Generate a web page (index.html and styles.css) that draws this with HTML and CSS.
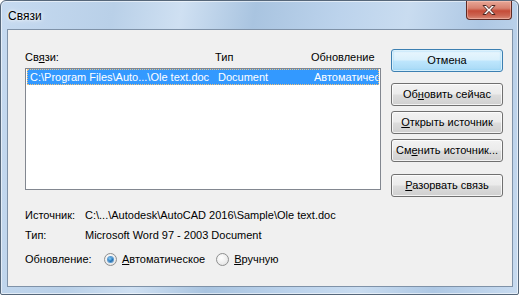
FILE: index.html
```html
<!DOCTYPE html>
<html lang="ru">

<head>
  <meta charset="UTF-8">
  <meta name="viewport" content="width=device-width, initial-scale=1.0">
  <title>Связи</title>
  <link rel="stylesheet" href="styles.css">
</head>

<body>
  <div class="window">
    <div class="titlebar">
      <span class="title">Связи</span>
      <div class="close">
        <svg width="16" height="12" viewBox="0 0 16 12">
          <path d="M2 1.5h3.2L8 4.6l2.8-3.1H14L9.7 6l4.3 4.5h-3.2L8 7.4l-2.8 3.1H2L6.3 6z" fill="#fff" stroke="#4b2520" stroke-width="1" stroke-linejoin="round" />
        </svg>
      </div>
    </div>

    <div class="client">
      <div class="main">
        <div class="links">
          <div class="cols">
            <span>Св<u>я</u>зи:</span>
            <span>Тип</span>
            <span>Обновление</span>
          </div>
          <div class="list">
            <div class="row selected">
              <span class="cell first">C:\Program Files\Auto...\Ole text.doc</span>
              <span class="cell">Document</span>
              <span class="cell">Автоматическое</span>
            </div>
          </div>
        </div>

        <div class="buttons">
          <div class="btn default">Отмена</div>
          <div class="btn gap-top">Об<u>н</u>овить сейчас</div>
          <div class="btn"><u>О</u>ткрыть источник</div>
          <div class="btn">См<u>е</u>нить источник...</div>
          <div class="btn gap-big"><u>Р</u>азорвать связь</div>
        </div>
      </div>

      <div class="info">
        <div class="info-row">
          <span class="info-label">Источник:</span>
          <span>C:\...\Autodesk\AutoCAD 2016\Sample\Ole text.doc</span>
        </div>
        <div class="info-row">
          <span class="info-label">Тип:</span>
          <span>Microsoft Word 97 - 2003 Document</span>
        </div>
        <div class="info-row update">
          <span class="info-label">Обновление:</span>
          <label class="radio"><span class="dot checked"></span><span><u>А</u>втоматическое</span></label>
          <label class="radio"><span class="dot"></span><span><u>В</u>ручную</span></label>
        </div>
      </div>
    </div>
  </div>
</body>

</html>
```

FILE: styles.css
```css
* {
  box-sizing: border-box;
}

body {
  margin: 0;
  background: #ffffff;
  font-family: 'Liberation Sans', Arial, sans-serif;
  font-size: 11px;
  color: #000;
}

u {
  text-decoration: underline;
  text-underline-offset: 1px;
}

.window {
  width: 519px;
  height: 295px;
  border: 1px solid #56677a;
  border-radius: 6px 6px 2px 2px;
  background: linear-gradient(100deg, #c6daf0 0%, #b9d0e8 20%, #cfe0f2 32%, #a9c4e0 45%, #bcd3ec 60%, #c9dcf0 72%, #aec8e4 85%, #c8dbf0 100%);
  display: flex;
  flex-direction: column;
  box-shadow: inset 0 0 0 1px rgba(255, 255, 255, 0.55);
}

.titlebar {
  height: 28px;
  display: flex;
  justify-content: space-between;
  align-items: flex-start;
}

.title {
  font-size: 12px;
  margin: 8px 0 0 7px;
  text-shadow: 0 0 6px #fff, 0 0 3px #fff;
}

.close {
  width: 46px;
  height: 19px;
  margin-right: 6px;
  border: 1px solid #5e2a24;
  border-top: 0;
  border-radius: 0 0 4px 4px;
  background: linear-gradient(#e8a797 0%, #d88270 40%, #c54c38 55%, #cc6552 80%, #d98a78 100%);
  box-shadow: inset 0 0 0 1px rgba(255, 210, 200, 0.45);
  display: flex;
  align-items: center;
  justify-content: center;
}

.client {
  flex: 1;
  margin: 0 5px 7px 6px;
  border: 1px solid #7f92a8;
  background: #f0f0f0;
  padding: 19px 8px 0 17px;
}

.main {
  display: flex;
  gap: 10px;
}

.links {
  width: 356px;
}

.cols,
.row {
  display: grid;
  grid-template-columns: 190px 96px 1fr;
}

.cols {
  height: 19px;
  padding-top: 1px;
  line-height: 14px;
}

.list {
  height: 122px;
  border: 1px solid #828790;
  background: #fff;
  padding: 0 1px;
}

.row {
  height: 16px;
  line-height: 14px;
  overflow: hidden;
  white-space: nowrap;
}

.row.selected {
  background: #3399ff;
  color: #fff;
  border: 1px dotted #f2c27a;
}

.cell {
  overflow: hidden;
}

.cell.first {
  padding-left: 2px;
}

.buttons {
  width: 112px;
  display: flex;
  flex-direction: column;
  gap: 5px;
}

.btn {
  height: 23px;
  line-height: 21px;
  text-align: center;
  border: 1px solid #707070;
  border-radius: 3px;
  background: linear-gradient(#f2f2f2 0%, #ebebeb 48%, #dddddd 52%, #cfcfcf 100%);
  box-shadow: inset 0 0 0 1px rgba(255, 255, 255, 0.75);
  white-space: nowrap;
}

.btn.default {
  border-color: #3c7fb1;
  background: linear-gradient(#eaf6fd 0%, #d9f0fc 48%, #bee6fd 52%, #a7d9f5 100%);
  box-shadow: inset 0 0 0 1px rgba(255, 255, 255, 0.6), inset 0 0 2px 1px #8fd2f5;
}

.btn.gap-top {
  margin-top: 6px;
}

.btn.gap-big {
  margin-top: 7px;
}

.info {
  margin-top: 11px;
}

.info-row {
  display: flex;
  align-items: center;
  height: 14px;
  line-height: 14px;
  margin-bottom: 6px;
  white-space: nowrap;
}

.info-label {
  width: 60px;
}

.info-row.update {
  height: 16px;
  margin-top: 9px;
}

.update .info-label {
  width: 79px;
}

.radio {
  display: flex;
  align-items: center;
  gap: 5px;
  margin-right: 11px;
}

.dot {
  width: 13px;
  height: 13px;
  border-radius: 50%;
  border: 1px solid #8e8f8f;
  background: radial-gradient(circle at 40% 35%, #ffffff 0%, #ececec 60%, #d6d6d6 100%);
  display: flex;
  align-items: center;
  justify-content: center;
}

.dot.checked::after {
  content: "";
  width: 5px;
  height: 5px;
  border-radius: 50%;
  background: radial-gradient(circle at 40% 35%, #8ad4ff 0%, #1d6fb5 60%, #0a3d75 100%);
  box-shadow: 0 0 0 1px #5a9ad0;
}
```
